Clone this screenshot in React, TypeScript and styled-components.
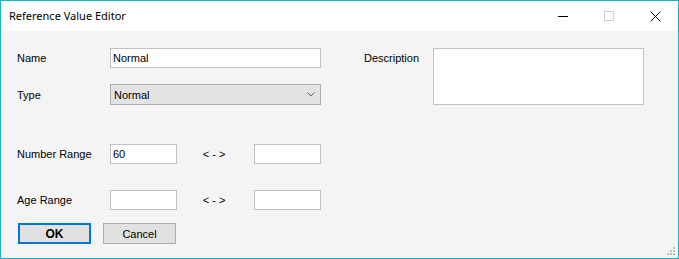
import React from "react";
import styled, { createGlobalStyle } from "styled-components";

const Global = createGlobalStyle`
  html, body { margin: 0; padding: 0; background: #ffffff; }
  * { box-sizing: border-box; }
`;

const Window = styled.div`
  width: 679px;
  height: 259px;
  border: 1px solid #1ab3c6;
  display: flex;
  flex-direction: column;
  background: #f4f4f4;
  position: relative;
  font-family: "Liberation Sans", Arial, sans-serif;
  font-size: 11px;
  color: #000;
`;

const TitleBar = styled.div`
  height: 30px;
  background: #ffffff;
  display: flex;
  align-items: center;
  flex-shrink: 0;
`;

const Title = styled.div`
  flex: 1;
  padding-left: 8px;
  font-family: "Noto Sans", "Segoe UI", sans-serif;
  font-size: 11px;
  color: #000;
  padding-bottom: 1px;
`;

const CaptionButton = styled.div`
  width: 46px;
  height: 30px;
  display: flex;
  align-items: center;
  justify-content: center;
`;

const Body = styled.div`
  flex: 1;
  display: flex;
  padding: 17px 0 0 16px;
`;

const FormColumn = styled.div`
  display: flex;
  flex-direction: column;
  width: 305px;
`;

const Row = styled.div<{ $top: number }>`
  display: flex;
  align-items: center;
  margin-top: ${(p) => p.$top}px;
`;

const Label = styled.div`
  width: 93px;
`;

const TextBox = styled.div<{ $w: number }>`
  width: ${(p) => p.$w}px;
  height: 20px;
  background: #fff;
  border: 1px solid #c2c2c2;
  padding: 2px 0 0 2px;
  line-height: 14px;
`;

const Combo = styled.div`
  width: 211px;
  height: 21px;
  background: #e3e3e3;
  border: 1px solid #adadad;
  display: flex;
  align-items: center;
  justify-content: space-between;
  padding: 0 5px 0 3px;
`;

const Arrow = styled.div`
  width: 77px;
  text-align: center;
  padding-right: 3px;
`;

const ButtonRow = styled.div`
  display: flex;
  gap: 12px;
  margin-top: 13px;
  padding-left: 1px;
`;

const Button = styled.div<{ $primary?: boolean }>`
  width: 73px;
  height: 21px;
  background: #e1e1e1;
  border: ${(p) => (p.$primary ? "2px solid #0078d7" : "1px solid #adadad")};
  display: flex;
  align-items: center;
  justify-content: center;
  font-weight: ${(p) => (p.$primary ? "bold" : "normal")};
  font-size: ${(p) => (p.$primary ? "12px" : "11px")};
`;

const DescSection = styled.div`
  display: flex;
  margin-left: 42px;
`;

const DescLabel = styled.div`
  width: 69px;
  padding-top: 4px;
`;

const DescBox = styled.div`
  width: 211px;
  height: 57px;
  background: #fff;
  border: 1px solid #c2c2c2;
`;

const Grip = styled.svg`
  position: absolute;
  right: 2px;
  bottom: 2px;
`;

export default function App() {
  return (
    <>
      <Global />
      <Window>
        <TitleBar>
          <Title>Reference Value Editor</Title>
          <CaptionButton>
            <svg width="10" height="10" viewBox="0 0 10 10">
              <rect x="0" y="5" width="10" height="1" fill="#000" />
            </svg>
          </CaptionButton>
          <CaptionButton>
            <svg width="10" height="10" viewBox="0 0 10 10">
              <rect x="0.5" y="0.5" width="9" height="9" fill="none" stroke="#cccccc" />
            </svg>
          </CaptionButton>
          <CaptionButton>
            <svg width="11" height="11" viewBox="0 0 11 11">
              <path d="M0.5 0.5 L10.5 10.5 M10.5 0.5 L0.5 10.5" stroke="#000" strokeWidth="1" />
            </svg>
          </CaptionButton>
        </TitleBar>
        <Body>
          <FormColumn>
            <Row $top={0}>
              <Label>Name</Label>
              <TextBox $w={211}>Normal</TextBox>
            </Row>
            <Row $top={16}>
              <Label>Type</Label>
              <Combo>
                <span>Normal</span>
                <svg width="8" height="5" viewBox="0 0 8 5">
                  <path d="M0.5 0.5 L4 4 L7.5 0.5" stroke="#606060" fill="none" />
                </svg>
              </Combo>
            </Row>
            <Row $top={39}>
              <Label>Number Range</Label>
              <TextBox $w={67}>60</TextBox>
              <Arrow>{"< - >"}</Arrow>
              <TextBox $w={67} />
            </Row>
            <Row $top={26}>
              <Label>Age Range</Label>
              <TextBox $w={67} />
              <Arrow>{"< - >"}</Arrow>
              <TextBox $w={67} />
            </Row>
            <ButtonRow>
              <Button $primary>OK</Button>
              <Button>Cancel</Button>
            </ButtonRow>
          </FormColumn>
          <DescSection>
            <DescLabel>Description</DescLabel>
            <DescBox />
          </DescSection>
        </Body>
        <Grip width="9" height="9" viewBox="0 0 9 9">
          <g fill="#bdbdbd">
            <rect x="6" y="0" width="2" height="2" />
            <rect x="3" y="3" width="2" height="2" />
            <rect x="6" y="3" width="2" height="2" />
            <rect x="0" y="6" width="2" height="2" />
            <rect x="3" y="6" width="2" height="2" />
            <rect x="6" y="6" width="2" height="2" />
          </g>
        </Grip>
      </Window>
    </>
  );
}
